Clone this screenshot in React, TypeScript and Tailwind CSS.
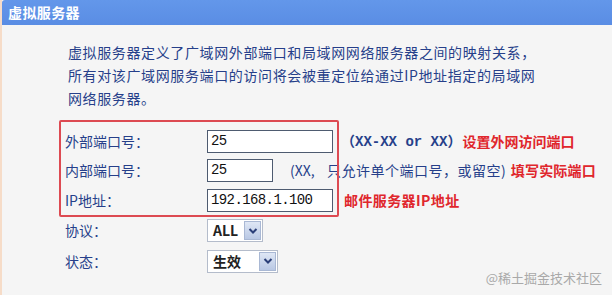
import React from "react";

const cjk = { fontFamily: '"Noto Sans CJK SC", "Noto Sans", sans-serif' };

function Chevron() {
  return (
    <svg width="10" height="8" viewBox="0 0 10 8">
      <path d="M1.5 2 L5 5.5 L8.5 2" fill="none" stroke="#2b3f78" strokeWidth="2" />
    </svg>
  );
}

function Select({ value, width }: { value: string; width: string }) {
  return (
    <div className={`flex h-[23px] ${width} items-stretch border border-[#b4bccb] bg-white`}>
      <div className="flex flex-1 items-center pl-[5px] text-[14px] font-bold text-[#222]">{value}</div>
      <div className="m-[1px] flex w-[17px] items-center justify-center border border-[#a9b8d4] bg-gradient-to-b from-[#dfe7f5] to-[#b9c8e4]">
        <Chevron />
      </div>
    </div>
  );
}

function Input({ value, width }: { value: string; width: string }) {
  return (
    <div
      className={`flex h-[23px] ${width} items-center border border-[#4e5b70] bg-white pl-[3px] text-[14px] text-[#111]`}
      style={{ fontFamily: '"Liberation Mono", "Noto Sans CJK SC", monospace', letterSpacing: "-0.6px" }}
    >
      {value}
    </div>
  );
}

export default function App() {
  return (
    <div className="relative h-[295px] w-[612px] overflow-hidden border-l-2 border-[#f6dcc8] bg-[#f5f5f5]" style={cjk}>
      <div className="flex h-[25px] items-center rounded-tl-[3px] bg-gradient-to-b from-[#6397ea] to-[#5a8de4] pl-[6px] text-[14px] font-bold tracking-[0.4px] text-white">
        虚拟服务器
      </div>

      <div className="mt-[16px] pl-[66px] text-[14px] leading-[23px] tracking-[0.62px] text-[#263f8a]">
        <div>虚拟服务器定义了广域网外部端口和局域网网络服务器之间的映射关系，</div>
        <div>所有对该广域网服务端口的访问将会被重定位给通过IP地址指定的局域网</div>
        <div>网络服务器。</div>
      </div>

      <div className="mt-[17px] flex flex-col pl-[63px] text-[14px] text-[#263f8a]">
        <div className="flex h-[29px] items-center">
          <div className="w-[142px]">外部端口号：</div>
          <Input value="25" width="w-[126px]" />
          <div className="ml-[8px] font-bold" style={{ fontFamily: '"Liberation Mono", "Noto Sans CJK SC", monospace' }}>
            <span style={cjk}>（</span>XX-XX or XX<span style={cjk}>）</span>
          </div>
          <div className="ml-[1px] font-bold text-[#e0262c]">设置外网访问端口</div>
        </div>
        <div className="flex h-[29px] items-center">
          <div className="w-[142px]">内部端口号：</div>
          <Input value="25" width="w-[66px]" />
          <div className="ml-[17px] flex items-center">
            <span className="inline-block w-[37px]">(XX,</span>
            <span className="tracking-[0.5px]">只允许单个端口号，或留空</span>
            <span>)</span>
          </div>
          <div className="ml-[5px] font-bold tracking-[0.2px] text-[#e0262c]">填写实际端口</div>
        </div>
        <div className="flex h-[30px] items-center">
          <div className="w-[142px]">IP地址：</div>
          <Input value="192.168.1.100" width="w-[126px]" />
          <div className="ml-[11px] font-bold tracking-[0.4px] text-[#e0262c]">邮件服务器IP地址</div>
        </div>
        <div className="flex h-[31px] items-center">
          <div className="w-[142px]">协议：</div>
          <Select value="ALL" width="w-[56px]" />
        </div>
        <div className="flex h-[30px] items-center">
          <div className="w-[142px]">状态：</div>
          <Select value="生效" width="w-[71px]" />
        </div>
      </div>

      <div className="pointer-events-none absolute left-[57px] top-[120px] h-[97px] w-[280px] rounded-[2px] border-2 border-[#dd4a52]" />

      <div className="absolute bottom-[8px] right-[10px] text-[13px] text-[#a9a9a9]">@稀土掘金技术社区</div>
    </div>
  );
}
